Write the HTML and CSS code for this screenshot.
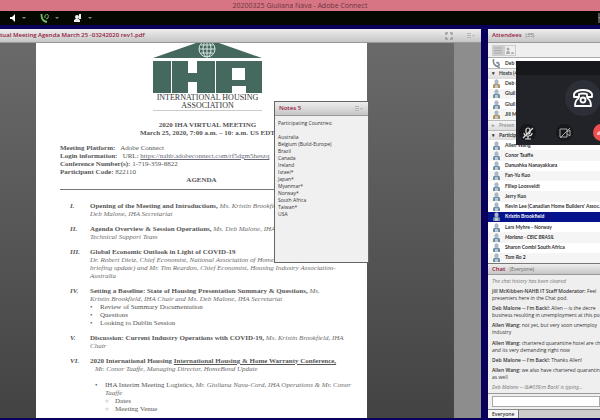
FILE: index.html
```html
<!DOCTYPE html>
<html lang="en">
<head>
    <meta charset="UTF-8">
    <title>20200325 Giuliana Nava - Adobe Connect</title>
    <link rel="stylesheet" href="styles.css">
</head>
<body>
<svg class="sprite" width="0" height="0">
    <symbol id="person" viewBox="0 0 9 9">
        <path d="M1 9V6.500Q1 4.500 4.500 4.500T8 6.500V9Z" fill="currentColor"/>
        <ellipse cx="4.500" cy="2.800" rx="2.100" ry="2.500" fill="#a9b8c4"/>
        <path d="M3 6h3v3H3z" fill="#b9c8d4"/>
    </symbol>
    <symbol id="menu" viewBox="0 0 9 7">
        <path d="M0 1.500h4M0 3.500h4M0 5.500h4" stroke="#b8b8b8"/>
        <path d="M5 3h3L6.500 5z" fill="#b8b8b8"/>
    </symbol>
</svg>
<header class="titlebar">20200325 Giuliana Nava - Adobe Connect</header>
<nav class="toolbar">
    <button aria-label="Speaker">
        <svg width="8" height="10" viewBox="0 0 8 10"><path d="M1 4h2l3-3v8L3 6H1z" fill="#fff"/></svg>
    </button>
    <button aria-label="Phone">
        <svg width="10" height="10" viewBox="0 0 10 10"><path d="M1.500 1Q1 8 7 9" stroke="#79c264" stroke-width="1.800" fill="none"/><path d="M5 5q-1-3 1.500-3.500T8 5L6 6" stroke="#79c264" fill="none"/></svg>
    </button>
    <button aria-label="Raise hand">
        <svg width="10" height="10" viewBox="0 0 10 10"><circle cx="4" cy="4" r="2" fill="#eee"/><path d="M1 9V7q3-3 6 0v2zM6 1h2v5H6z" fill="#eee"/></svg>
    </button>
    <button class="more" aria-label="More"></button>
</nav>
<main class="workspace">
    <section class="share">
        <div class="bar share-bar">
            <h2>tual Meeting Agenda March 25 -03242020 rev1.pdf</h2>
            <svg class="expand" width="8" height="8" viewBox="0 0 8 8"><path d="M1 3V1h2M5 1h2v2M7 5v2H5M3 7H1V5" stroke="#999" stroke-width="1.500" fill="none"/></svg>
            <svg class="menu" width="9" height="7"><use href="#menu"/></svg>
        </div>
        <div class="viewer">
            <article class="page">
                <svg class="logo" width="109" height="51" viewBox="0 0 109 51">
                    <path d="M0 15 43 0h23l43 15z" fill="#45695f"/>
                    <g stroke="#dbe6e2" stroke-width="1" fill="#45695f">
                        <circle cx="54" cy="6" r="8"/>
                        <ellipse cx="54" cy="6" rx="4" ry="8"/>
                        <path d="M54 0v14M46 6h16M48 2h12M48 10h12"/>
                    </g>
                    <path d="M0 18h18v32H0zM19 18h16v12h9V18h18v32H44V39h-9v11H19zM63 18h46v32H93v-7H79v7H63z" fill="#45695f"/>
                    <path d="M79 25h13v12H79z" fill="#fff"/>
                </svg>
                <div class="org">INTERNATIONAL HOUSING<br>ASSOCIATION</div>
                <h1>2020 IHA VIRTUAL MEETING<br>March 25, 2020, 7:00 a.m. – 10: a.m. US EDT</h1>
                <div class="details">
                    <b>Meeting Platform:</b> &nbsp; Adobe Connect<br>
                    <b>Login information:</b> &nbsp; URL: <a href="#">https://nahb.adobeconnect.com/rf5dgm5heszq</a><br>
                    <b>Conference Number(s):</b> 1-719-359-8822<br>
                    <b>Participant Code:</b> 822110
                </div>
                <h3>AGENDA</h3>
                <div class="agenda">
                    <b class="num">I.</b>
                    <div><b>Opening of the Meeting and Introductions,</b> <i>Ms. Kristin Brookfie<br>Deb Malone, IHA Secretariat</i></div>
                    <b class="num">II.</b>
                    <div><b>Agenda Overview &amp; Session Operations,</b> <i>Ms. Deb Malone, IHA S<br>Technical Support Team</i></div>
                    <b class="num">III.</b>
                    <div><b>Global Economic Outlook in Light of COVID-19</b><br><i>Dr. Robert Dietz, Chief Economist, National Association of Home Builders (housing<br>briefing update) and Mr. Tim Reardon, Chief Economist, Housing Industry Association-<br>Australia</i></div>
                    <b class="num">IV.</b>
                    <div><b>Setting a Baseline: State of Housing Presentation Summary &amp; Questions,</b> <i>Ms.<br>Kristin Brookfield, IHA Chair and Ms. Deb Malone, IHA Secretariat</i>
                        <ul>
                            <li>Review of Summary Documentation</li>
                            <li>Questions</li>
                            <li>Looking to Dublin Session</li>
                        </ul>
                    </div>
                    <b class="num">V.</b>
                    <div><b>Discussion: Current Industry Operations with COVID-19,</b> <i>Ms. Kristin Brookfield, IHA<br>Chair</i></div>
                    <b class="num">VI.</b>
                    <div><b>2020 International Housing <u>International Housing &amp; Home Warranty Conference,</u></b><br><i class="indent">Mr. Conor Taaffe, Managing Director, HomeBond Update</i>
                        <ul class="logistics">
                            <li>IHA Interim Meeting Logistics, <i>Mr. Giuliana Nava-Cord, IHA Operations &amp; Mr. Conor<br>Taaffe</i>
                                <ul class="rings">
                                    <li>Dates</li>
                                    <li>Meeting Venue</li>
                                </ul>
                            </li>
                        </ul>
                    </div>
                </div>
            </article>
            <div class="gutter"></div>
        </div>
        <aside class="notes">
            <div class="bar">
                <h2>Notes 5</h2>
                <svg class="menu" width="9" height="7"><use href="#menu"/></svg>
            </div>
            <p>Participating Countries:<br><br>Australia<br>Belgium (Build-Europe)<br>Brazil<br>Canada<br>Ireland<br>Israel*<br>Japan*<br>Myanmar*<br>Norway*<br>South Africa<br>Taiwan*<br>USA</p>
        </aside>
    </section>
    <section class="side">
        <div class="bar"><h2>Attendees</h2><span>(35)</span></div>
        <div class="views">
            <button aria-label="List view"><svg width="8" height="7" viewBox="0 0 8 7"><path d="M0 1h8M0 3.500h8M0 6h8" stroke="#aaa"/></svg></button>
            <button aria-label="Status view"><svg width="8" height="7" viewBox="0 0 8 7"><path d="M0 7q0-3 2-3t2 3zM5 7q0-2 1.500-2T8 7z" fill="#aaa"/><circle cx="2" cy="2" r="1.500" fill="#aaa"/></svg></button>
        </div>
        <ul class="people hosts">
            <li class="speaking"><svg viewBox="0 0 8 8"><path d="M1.500 0Q0 6 7 7.500M4 4q1-2 2 0t-1 2" stroke="#7d8a94" stroke-width="1.400" fill="none"/></svg>Deb M</li>
            <li class="group">Hosts (4)</li>
            <li class="gold"><svg><use href="#person"/></svg>Deb M</li>
            <li><svg><use href="#person"/></svg>Giuli</li>
            <li><svg><use href="#person"/></svg>Giuli</li>
            <li class="gold"><svg><use href="#person"/></svg>Jill M</li>
            <li class="group closed">Presen</li>
            <li class="group">Particip</li>
        </ul>
        <ul class="people participants">
            <li><svg><use href="#person"/></svg>Allen Wang</li>
            <li><svg><use href="#person"/></svg>Conor Taaffe</li>
            <li><svg><use href="#person"/></svg>Danushka Nanayakkara</li>
            <li><svg><use href="#person"/></svg>Fan-Yu Kuo</li>
            <li><svg><use href="#person"/></svg>Filiep Loosveldt</li>
            <li><svg><use href="#person"/></svg>Jerry Kuo</li>
            <li><svg><use href="#person"/></svg>Kevin Lee (Canadian Home Builders' Assoc.</li>
            <li class="selected"><svg><use href="#person"/></svg>Kristin Brookfield</li>
            <li><svg><use href="#person"/></svg>Lars Myhre - Norway</li>
            <li><svg><use href="#person"/></svg><i>Mariana - CBIC BRASIL</i></li>
            <li><svg><use href="#person"/></svg>Sharon Combi South Africa</li>
            <li><svg><use href="#person"/></svg>Tom Ro 2</li>
        </ul>
        <div class="bar chat-bar"><h2>Chat</h2><span>(Everyone)</span></div>
        <div class="chat">
            <p><i>The chat history has been cleared</i></p>
            <p><b>Jill McKibben-NAHB IT Staff Moderator:</b> Feel<br>presenters here in the Chat pod.</p>
            <p><b>Deb Malone -- I'm Back!:</b> Allen -- is the decre<br>business resulting in unemployment at this po</p>
            <p><b>Allen Wang:</b> not yet, but very soon unemploy<br>industry</p>
            <p><b>Allen Wang:</b> chartered quarantine hotel are ch<br>and its very demanding right now</p>
            <p><b>Deb Malone -- I'm Back!:</b> Thanks Allen!</p>
            <p><b>Allen Wang:</b> we also have chartered quarantin<br>as well</p>
            <p><i>Deb Malone -- I&amp;#039;m Back! is typing...</i></p>
        </div>
        <div class="compose"><input type="text" aria-label="Message"></div>
        <div class="tabs"><button>Everyone</button></div>
        <div class="call">
            <svg class="call-phone" width="36" height="36" viewBox="0 0 36 36">
                <circle cx="18" cy="18" r="18" fill="#2d2f38"/>
                <g fill="none" stroke="#fff" stroke-width="1.800" stroke-linejoin="round">
                    <path d="M9 17v-3q2-4 9-4t9 4v3h-5v-3q-4-1-8 0v3z"/>
                    <path d="M14 18q-4 2-4 8h16q0-6-4-8"/>
                    <circle cx="18" cy="20" r="2.500"/>
                </g>
            </svg>
            <div class="call-buttons">
                <button aria-label="Unmute"><svg width="16" height="16" viewBox="0 0 16 16" fill="none" stroke="#ddd" stroke-width="1.200"><rect x="6" y="3" width="4" height="6" rx="2"/><path d="M4 8q0 3 4 3t4-3M8 11v3M5 14h6M3 13 13 3"/></svg></button>
                <button aria-label="Start video"><svg width="16" height="16" viewBox="0 0 16 16" fill="none" stroke="#aaa"><path d="M3 4h7v8H3zM10 7l3-2v6l-3-2M3 13 13 3"/></svg></button>
                <button class="hangup" aria-label="Hang up"><svg width="16" height="16" viewBox="0 0 16 16"><path d="M3 10q-1-4 5-4t5 4l-3 0V8H6v2z" fill="#fbb"/></svg></button>
            </div>
        </div>
    </section>
</main>
</body>
</html>
```
FILE: styles.css
```css
* {
    box-sizing: border-box;
}

body {
    margin: 0;
    height: 100vh;
    display: flex;
    flex-direction: column;
    overflow: hidden;
    background: #09005c;
    color: #333;
    font: 5px/7px "Open Sans", "Noto Sans", sans-serif;
}

h1, h2, h3, p, ul {
    margin: 0;
    padding: 0;
}

ul {
    list-style: none;
}

button {
    border: 0;
    padding: 0;
    background: none;
    font: inherit;
    color: inherit;
}

.sprite {
    position: absolute;
}

/* Window title and meeting toolbar */
.titlebar {
    flex: 0 0 11px;
    background: #d87584;
    color: #6b3540;
    text-align: center;
    font-size: 7px;
    line-height: 11px;
}

.toolbar {
    flex: 0 0 14px;
    display: flex;
    align-items: center;
    gap: 14px;
    padding-left: 9px;
    background: #050800;
}

.toolbar button {
    display: flex;
    align-items: center;
    gap: 5px;
}

.toolbar button::after {
    content: "";
    border: 2px solid transparent;
    border-top-color: #888;
    border-bottom: 0;
}

.toolbar .more {
    width: 2px;
    height: 10px;
    margin-left: auto;
    background: #555;
    overflow: hidden;
}

.workspace {
    flex: 1;
    min-height: 0;
    display: flex;
    gap: 7px;
    padding: 4px 0 2px;
}

/* Pod headers */
.bar {
    flex: 0 0 14px;
    display: flex;
    align-items: center;
    gap: 4px;
    padding: 0 4px;
    background: linear-gradient(#eee, #c6c6c6);
    border-bottom: 1px solid #999;
    color: #666;
}

.bar h2 {
    color: #96213f;
    font-size: 6px;
    font-weight: 600;
}

.bar .menu {
    margin-left: auto;
}

/* Shared document */
.share {
    position: relative;
    flex: 1;
    min-width: 0;
    display: flex;
    flex-direction: column;
}

.share-bar {
    padding: 0 5px 0 0;
}

.share-bar .expand {
    margin-left: auto;
}

.share-bar .menu {
    margin-left: 10px;
}

.viewer {
    flex: 1;
    min-height: 0;
    display: flex;
    background: linear-gradient(#6a6a6a, #434343);
}

.page {
    flex: 0 1 331px;
    margin-left: 36px;
    padding: 0 12px 0 24px;
    background: #fff;
    color: #555;
    font: 7px/8px "Liberation Serif", serif;
    white-space: nowrap;
    overflow: hidden;
}

.page i {
    color: #6c6c6c;
}

.gutter {
    width: 27px;
    margin-left: auto;
    background: #8d8d8d;
}

.logo {
    display: block;
    margin: 0 auto;
}

.org {
    width: 109px;
    margin: 0 auto 10px;
    border-bottom: 1px solid #ccc;
    color: #333;
    text-align: center;
    font-size: 8px;
}

.page h1, .page h3 {
    text-align: center;
    font-size: 7px;
    line-height: 8px;
}

.details {
    margin-top: 7px;
}

.page a {
    color: #667;
}

.page h3 {
    margin-right: 12px;
    padding-bottom: 5px;
    border-bottom: 1px solid #777;
}

.agenda {
    display: grid;
    grid-template-columns: 20px 1fr;
    row-gap: 7px;
    padding: 12px 0 0 10px;
}

.num {
    font-style: italic;
}

.page li {
    position: relative;
    padding-left: 10px;
}

.page li::before {
    content: "•";
    position: absolute;
    left: 0;
}

.indent {
    padding-left: 5px;
}

.logistics {
    padding: 8px 0 0 5px;
}

.page .rings li::before {
    content: "○";
    font-size: 6px;
}

.notes {
    position: absolute;
    left: 274px;
    top: 72px;
    width: 95px;
    height: 162px;
    border: 1px solid #666;
    background: #f0f0f0;
}

.notes .bar {
    height: 14px;
}

.notes p {
    padding: 4px 3px;
}

/* Attendees and chat */
.side {
    position: relative;
    flex: 0 0 112px;
    display: flex;
    flex-direction: column;
    overflow: hidden;
    background: #efefef;
    white-space: nowrap;
}

.views {
    flex: 0 0 15px;
    display: flex;
    align-items: center;
    padding-left: 4px;
    border-bottom: 1px solid #aaa;
}

.views button {
    display: flex;
    justify-content: center;
    align-items: center;
    width: 12px;
    height: 11px;
    border: 1px solid #ccc;
}

.views button:first-child {
    background: #ccc;
}

.people {
    display: grid;
    grid-auto-rows: 1fr;
    background: #fff;
    font-family: Lato, sans-serif;
    font-weight: 700;
}

.hosts {
    flex: 0 0 82px;
}

.participants {
    flex: 0 0 123px;
}

.people li {
    display: flex;
    align-items: center;
    gap: 4px;
    min-height: 0;
    padding-left: 4px;
}

.people li:nth-child(even) {
    background: #f5f5f5;
}

.people svg {
    flex: none;
    width: 9px;
    height: 9px;
    color: #6f8da3;
}

.people .gold svg {
    color: #b39254;
}

.people li.group {
    background: linear-gradient(#f4f4f4, #ddd);
    border-top: 1px solid #bbb;
}

.group::before {
    content: "▾";
    width: 3px;
}

.people li.closed {
    color: #999;
}

.closed::before {
    content: "▸";
}

.people li.selected {
    background: #06138c;
    color: #fff;
}

.chat-bar {
    flex-basis: 12px;
    border-top: 1px solid #777;
}

.chat {
    flex: 1;
    min-height: 0;
    display: flex;
    flex-direction: column;
    justify-content: space-between;
    padding: 3px 4px 2px;
    overflow: hidden;
}

.chat b {
    font-weight: 600;
}

.chat i {
    color: #777;
}

.compose {
    flex: 0 0 15px;
    padding: 2px 0 2px 4px;
    border-top: 1px solid #999;
}

.compose input {
    display: block;
    width: 100%;
    height: 11px;
    border: 1px solid #aaa;
    background: #fff;
}

.tabs {
    flex: 0 0 9px;
    display: flex;
    background: #ccc;
    border-top: 1px solid #888;
}

.tabs button {
    padding: 0 4px;
    background: #f4f4f4;
    border-right: 1px solid #777;
    font-weight: 600;
}

/* Call window floating over the attendee list */
.call {
    position: absolute;
    top: 32px;
    left: 28px;
    right: 0;
    height: 84px;
    background: linear-gradient(#17181b 14px, #222328 14px);
    overflow: hidden;
}

.call-phone {
    display: block;
    margin: 19px 0 0 49px;
}

.call-buttons {
    display: flex;
    gap: 20px;
    margin: 8px 0 0 3px;
}

.call-buttons button {
    flex: none;
    display: flex;
    justify-content: center;
    align-items: center;
    width: 17px;
    height: 17px;
    border-radius: 50%;
    background: #17181b;
}

.call-buttons .hangup {
    background: #f04e4e;
}
```
